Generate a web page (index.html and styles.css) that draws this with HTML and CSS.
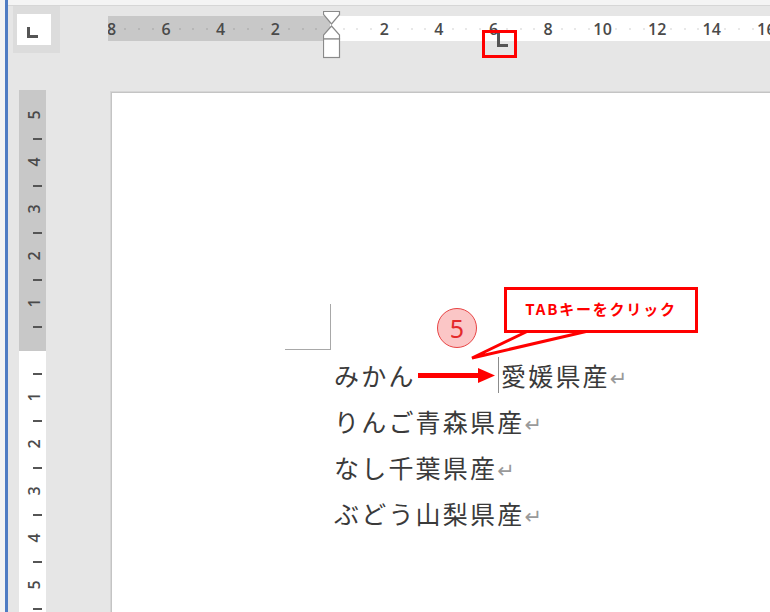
FILE: index.html
```html
<!DOCTYPE html>
<html lang="ja">
<head>
<meta charset="utf-8">
<title>Word tab</title>
<link rel="stylesheet" href="styles.css">
</head>
<body>
<div class="app">
  <div class="edge-light"></div>
  <div class="edge-blue"></div>
  <div class="main">
    <div class="topstrip"></div>
    <div class="corner-cell">
      <div class="tabsel-frame">
        <div class="tabsel"><span class="lmark"></span></div>
      </div>
    </div>
    <div class="hruler-cell">
      <div class="hruler">
        <div class="hruler-track">
          <span class="c n">8</span><span class="c d"></span><span class="c d"></span><span class="c d"></span>
          <span class="c n">6</span><span class="c d"></span><span class="c d"></span><span class="c d"></span>
          <span class="c n">4</span><span class="c d"></span><span class="c d"></span><span class="c d"></span>
          <span class="c n">2</span><span class="c d"></span><span class="c d"></span><span class="c d"></span>
          <span class="c n"></span><span class="c d"></span><span class="c d"></span><span class="c d"></span>
          <span class="c n">2</span><span class="c d"></span><span class="c d"></span><span class="c d"></span>
          <span class="c n">4</span><span class="c d"></span><span class="c d"></span><span class="c d"></span>
          <span class="c n">6</span><span class="c d"></span><span class="c d"></span><span class="c d"></span>
          <span class="c n">8</span><span class="c d"></span><span class="c d"></span><span class="c d"></span>
          <span class="c n">10</span><span class="c d"></span><span class="c d"></span><span class="c d"></span>
          <span class="c n">12</span><span class="c d"></span><span class="c d"></span><span class="c d"></span>
          <span class="c n">14</span><span class="c d"></span><span class="c d"></span><span class="c d"></span>
          <span class="c n">16</span>
        </div>
      </div>
      <svg class="indent" width="18" height="48" viewBox="0 0 18 48">
        <path d="M0.5 0.5 H16.5 V3.5 L8.5 13 L0.5 3.5 Z" fill="#fff" stroke="#8a8a8a" stroke-width="1.2"/>
        <path d="M8.5 15 L16.5 24 V28 H0.5 V24 Z" fill="#fff" stroke="#8a8a8a" stroke-width="1.2"/>
        <rect x="0.5" y="28" width="16" height="18.5" fill="#fff" stroke="#8a8a8a" stroke-width="1.2"/>
      </svg>
      <span class="tabstop"></span>
      <span class="redbox"></span>
    </div>
    <div class="vruler-cell">
      <div class="vruler">
        <span class="v n"><i>5</i></span><span class="v t"></span>
        <span class="v n"><i>4</i></span><span class="v t"></span>
        <span class="v n"><i>3</i></span><span class="v t"></span>
        <span class="v n"><i>2</i></span><span class="v t"></span>
        <span class="v n"><i>1</i></span><span class="v t"></span>
        <span class="v n"></span><span class="v t"></span>
        <span class="v n"><i>1</i></span><span class="v t"></span>
        <span class="v n"><i>2</i></span><span class="v t"></span>
        <span class="v n"><i>3</i></span><span class="v t"></span>
        <span class="v n"><i>4</i></span><span class="v t"></span>
        <span class="v n"><i>5</i></span><span class="v t"></span>
      </div>
    </div>
    <div class="page">
      <div class="margin-corner"></div>
      <div class="lines">
        <p class="line"><span class="tabbed">みかん</span><span class="cursor">愛媛県産</span><span class="ret">↵</span></p>
        <p class="line">りんご青森県産<span class="ret">↵</span></p>
        <p class="line">なし千葉県産<span class="ret">↵</span></p>
        <p class="line">ぶどう山梨県産<span class="ret">↵</span></p>
      </div>
    </div>
  </div>

  <svg class="annot" width="770" height="612" viewBox="0 0 770 612">
    <polygon points="527,331.5 586,331.5 472,358" fill="#fff"/>
    <polyline points="527,331.5 472,358 586,331.5" fill="none" stroke="#ff0000" stroke-width="3" stroke-linejoin="miter"/>
    <line x1="418" y1="375.5" x2="481" y2="375.5" stroke="#ff0000" stroke-width="5"/>
    <polygon points="478,368 495,375.5 478,383" fill="#ff0000"/>
  </svg>
  <div class="callout">TABキーをクリック</div>
  <div class="badge">5</div>
</div>
</body>
</html>
```

FILE: styles.css
```css
* { box-sizing: border-box; }
html, body { margin: 0; padding: 0; }
body {
  width: 770px;
  height: 612px;
  overflow: hidden;
  background: #e6e6e6;
  font-family: "Noto Sans CJK JP", "Noto Sans", sans-serif;
}
.app {
  position: relative;
  width: 770px;
  height: 612px;
  overflow: hidden;
  display: grid;
  grid-template-columns: 5px 3px 1fr;
}
.edge-light { background: #f3f3f3; }
.edge-blue { background: #4f7cc3; }

.main {
  display: grid;
  grid-template-columns: 100px 1fr;
  grid-template-rows: 6px 86px 1fr;
  background: #e6e6e6;
  min-height: 0;
}
.topstrip {
  grid-column: 1 / -1;
  background: #f4f4f4;
  border-bottom: 1px solid #d6d6d6;
}

/* tab selector */
.corner-cell { padding-left: 5px; }
.tabsel-frame {
  width: 47px;
  height: 47px;
  background: #dcdcdc;
  padding: 8px 9px 8px 4px;
}
.tabsel {
  width: 34px;
  height: 31px;
  background: #fff;
  padding: 13px 0 0 10px;
}
.lmark {
  display: block;
  width: 11px;
  height: 11px;
  border-left: 3px solid #555;
  border-bottom: 3px solid #555;
}

/* horizontal ruler */
.hruler-cell { position: relative; }
.hruler {
  margin-top: 10px;
  height: 25px;
  overflow: hidden;
  background: linear-gradient(to right, #c8c8c8 0, #c8c8c8 222px, #ffffff 222px);
}
.hruler-track {
  display: flex;
  align-items: center;
  height: 100%;
  margin-left: -3.2px;
}
.hruler-track .c {
  flex: none;
  width: 13.65px;
  display: flex;
  justify-content: center;
  align-items: center;
}
.hruler-track .n {
  font-family: "Open Sans", "Liberation Sans", sans-serif;
  font-weight: 600;
  font-size: 16px;
  color: #4a4a4a;
  white-space: nowrap;
  letter-spacing: 0.2px;
}
.hruler-track .d::before {
  content: "";
  width: 2px;
  height: 2px;
  background: rgba(0, 0, 0, 0.09);
}
.indent {
  position: absolute;
  left: 215px;
  top: 5px;
}
.tabstop {
  position: absolute;
  left: 389px;
  top: 26px;
  width: 11px;
  height: 15px;
  border-left: 3px solid #555;
  border-bottom: 3px solid #555;
}
.redbox {
  position: absolute;
  left: 374px;
  top: 24px;
  width: 35px;
  height: 28px;
  border: 3px solid #ff0000;
}

/* vertical ruler */
.vruler-cell { padding-left: 11px; }
.vruler {
  margin-top: -2px;
  width: 27px;
  height: 560px;
  padding-top: 13.25px;
  display: flex;
  flex-direction: column;
  background: linear-gradient(to bottom, #c8c8c8 0, #c8c8c8 261px, #ffffff 261px);
}
.vruler .v {
  flex: none;
  height: 23.5px;
  display: flex;
  align-items: center;
  justify-content: center;
}
.vruler .n i {
  font-style: normal;
  display: block;
  transform: rotate(-90deg);
  font-family: "Open Sans", "Liberation Sans", sans-serif;
  font-weight: 600;
  font-size: 16px;
  color: #4a4a4a;
  line-height: 1;
  margin-left: 3px;
}
.vruler .t::before {
  content: "";
  width: 9px;
  height: 2px;
  background: #555;
  margin-left: 9px;
}

/* page */
.page {
  margin-left: 3px;
  background: #fff;
  border-left: 1px solid #c4c4c4;
  border-top: 1px solid #c4c4c4;
  box-shadow: -1px -1px 0 #d6d6d6;
  padding: 211px 0 0 173px;
  min-height: 0;
}
.margin-corner {
  width: 46px;
  height: 46px;
  border-right: 1.5px solid #a8a8a8;
  border-bottom: 1.5px solid #a8a8a8;
}
.lines {
  margin: 2px 0 0 49px;
}
.line {
  margin: 0;
  height: 46px;
  line-height: 46px;
  font-size: 25px;
  letter-spacing: 2.2px;
  color: #3a3a3a;
  white-space: nowrap;
}
.tabbed {
  display: inline-block;
  width: 164px;
}
.cursor {
  border-left: 1px solid #8c8c8c;
  padding-left: 2px;
}
.ret {
  font-family: "DejaVu Sans", sans-serif;
  font-size: 21px;
  color: #9a9a9a;
  letter-spacing: 0;
  vertical-align: 0;
}

/* annotations */
.annot {
  position: absolute;
  left: 0;
  top: 0;
  pointer-events: none;
}
.callout {
  position: absolute;
  left: 504px;
  top: 287px;
  width: 194px;
  height: 46px;
  border: 3px solid #ff0000;
  background: #fff;
  color: #ff0000;
  font-weight: 700;
  font-size: 15px;
  letter-spacing: 1.8px;
  display: flex;
  align-items: center;
  justify-content: center;
  padding-bottom: 4px;
}
.badge {
  position: absolute;
  left: 437px;
  top: 308px;
  width: 40px;
  height: 40px;
  border-radius: 50%;
  border: 1.5px solid #e84444;
  background: #fbc6c6;
  color: #e42a2a;
  font-family: "Noto Sans", "Liberation Sans", sans-serif;
  font-size: 25px;
  line-height: 1;
  display: flex;
  align-items: center;
  justify-content: center;
}
```
